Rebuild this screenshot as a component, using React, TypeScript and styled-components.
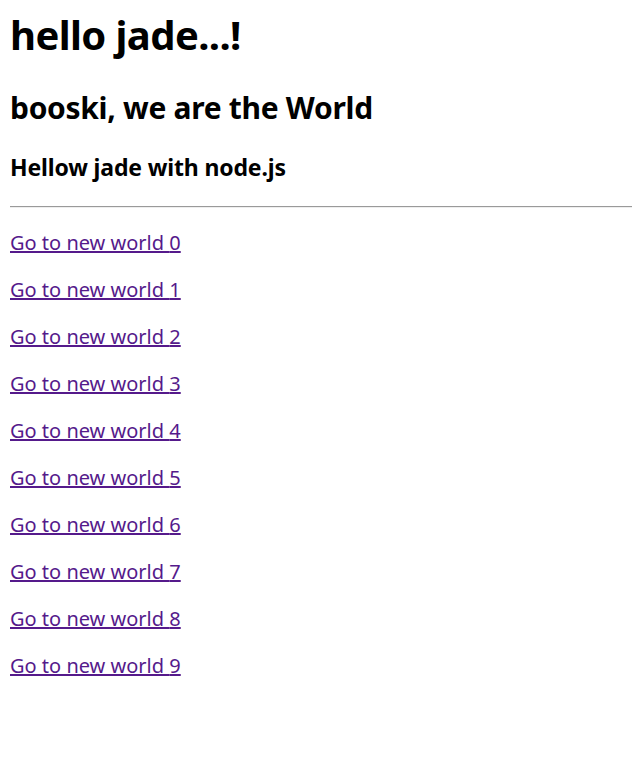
import * as React from "react";
import styled, { createGlobalStyle } from "styled-components";

const GlobalStyle = createGlobalStyle`
  body {
    margin: 0;
    background: #fff;
    color: #000;
    font-family: "Noto Sans", "Noto Sans CJK KR", sans-serif;
  }
`;

const Page = styled.div`
  padding: 8px 1px 0 10px;
`;

const Title = styled.h1`
  font-size: 40px;
  line-height: 54px;
  font-weight: bold;
  letter-spacing: -0.6px;
  margin: 0 0 26px;
`;

const SubTitle = styled.h2`
  font-size: 30px;
  line-height: 40px;
  font-weight: bold;
  letter-spacing: -0.3px;
  margin: 0 0 24px;
`;

const Lead = styled.h3`
  font-size: 23px;
  line-height: 31px;
  font-weight: bold;
  letter-spacing: -0.15px;
  margin: 0;
`;

const Rule = styled.hr`
  margin: 23px 0 21px;
  border: none;
  border-top: 1px solid #9a9a9a;
  border-bottom: 1px solid #eeeeee;
  height: 0;
`;

const LinkList = styled.div`
  display: flex;
  flex-direction: column;
  gap: 20px;
`;

const Item = styled.p`
  margin: 0;
  font-size: 20px;
  line-height: 27px;
`;

const WorldLink = styled.a`
  color: #551a8b;
  text-decoration: underline;
`;

export default function App() {
  const worlds = Array.from({ length: 10 }, (_, i) => i);
  return (
    <>
      <GlobalStyle />
      <Page>
        <Title>hello jade...!</Title>
        <SubTitle>booski, we are the World</SubTitle>
        <Lead>Hellow jade with node.js</Lead>
        <Rule />
        <LinkList>
          {worlds.map((n) => (
            <Item key={n}>
              <WorldLink href={`#world${n}`}>Go to new world {n}</WorldLink>
            </Item>
          ))}
        </LinkList>
      </Page>
    </>
  );
}
